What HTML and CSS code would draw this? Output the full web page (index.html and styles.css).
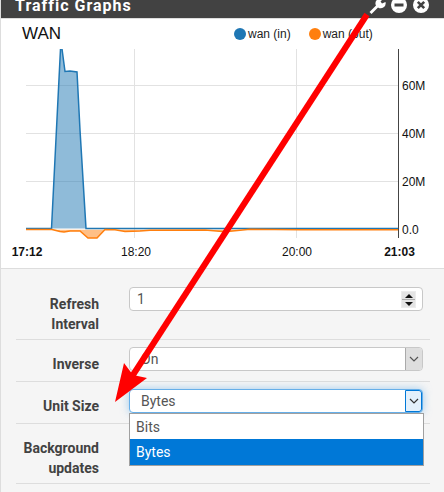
FILE: index.html
```html
<!DOCTYPE html>
<html lang="en">
<head>
    <meta charset="UTF-8">
    <meta name="viewport" content="width=device-width, initial-scale=1.0">
    <title>Traffic Graphs</title>
    <link rel="stylesheet" href="styles.css">
</head>
<body>
    <div class="panel">
        <header class="panel-heading">
            <h2>Traffic Graphs</h2>
            <div class="panel-icons">
                <svg width="18" height="18" viewBox="0 0 18 18">
                    <path d="M1.5 16 L8 9.5 A5 5 0 0 1 15 3 L12.5 5.5 L14 7.5 L17.5 6 A5 5 0 0 1 10 11.5 L3.5 18 Z" fill="#fff"/>
                </svg>
                <svg width="18" height="18" viewBox="0 0 18 18">
                    <circle cx="9" cy="9" r="8" fill="#fff"/>
                    <rect x="4.5" y="7.5" width="9" height="3" fill="#424242"/>
                </svg>
                <svg width="18" height="18" viewBox="0 0 18 18">
                    <circle cx="9" cy="9" r="8" fill="#fff"/>
                    <path d="M5.8 5.8 L12.2 12.2 M12.2 5.8 L5.8 12.2" stroke="#424242" stroke-width="2.6"/>
                </svg>
            </div>
        </header>

        <section class="chart-box">
            <div class="chart-title">
                <span class="wan">WAN</span>
                <div class="legend">
                    <span class="legend-item"><i class="dot dot-in"></i>wan (in)</span>
                    <span class="legend-item"><i class="dot dot-out"></i>wan (out)</span>
                </div>
            </div>
            <svg class="chart" width="443" height="219" viewBox="1 49 443 219">
                <path d="M26 85.5H398M26 133.5H398M26 181.5H398M134.5 49V238M296.5 49V238" stroke="#e2e2e2" stroke-width="1"/>
                <path d="M51.5 228.5 L60.5 49 L62 49 L65 71.5 L70 71 L77 72 L80 130 L86 228.5 L398 228.5 Z" fill="#1f77b4" fill-opacity="0.5"/>
                <path d="M26 228.5 H51.5 L60.5 49 M62 49 L65 71.5 L70 71 L77 72 L80 130 L86 228.5 H398" fill="none" stroke="#1f77b4" stroke-width="1.5"/>
                <path d="M26 229.5 H52 L60 231.5 L64 232 L70 231 L80 231 L88 238 L97 238 L105 229.5 L115 229.7 L125 231.5 L140 231 L150 230.2 L205 230 L225 231.7 L240 230.3 L250 229.3 L300 229.8 H398 Z" fill="#ff7f0e" fill-opacity="0.5"/>
                <path d="M26 229.5 H52 L60 231.5 L64 232 L70 231 L80 231 L88 238 L97 238 L105 229.5 L115 229.7 L125 231.5 L140 231 L150 230.2 L205 230 L225 231.7 L240 230.3 L250 229.3 L300 229.8 H398" fill="none" stroke="#ff7f0e" stroke-width="1.5"/>
                <path d="M398.5 49V238" stroke="#444" stroke-width="1"/>
                <g class="tick">
                    <text x="402" y="90">60M</text>
                    <text x="402" y="138">40M</text>
                    <text x="402" y="186">20M</text>
                    <text x="402" y="234">0.0</text>
                    <text x="136" y="255.5" text-anchor="middle">18:20</text>
                    <text x="297" y="255.5" text-anchor="middle">20:00</text>
                    <text class="tick-bold" x="27" y="255.5" text-anchor="middle">17:12</text>
                    <text class="tick-bold" x="399.5" y="255.5" text-anchor="middle">21:03</text>
                </g>
            </svg>
        </section>

        <form class="settings">
            <div class="row row-first">
                <label>Refresh<br>Interval</label>
                <div class="control number-box">
                    <span class="value">1</span>
                    <span class="spinner">
                        <b class="spin-up"></b>
                        <b class="spin-down"></b>
                    </span>
                </div>
            </div>
            <div class="row">
                <label>Inverse</label>
                <div class="control select-box">
                    <span class="value">On</span>
                    <span class="select-btn"><svg width="10" height="6" viewBox="0 0 10 6"><path d="M1 1 L5 5 L9 1" fill="none" stroke="#555" stroke-width="1.2"/></svg></span>
                </div>
            </div>
            <div class="row">
                <label>Unit Size</label>
                <div class="control select-box is-open">
                    <span class="value">Bytes</span>
                    <span class="select-btn"><svg width="10" height="6" viewBox="0 0 10 6"><path d="M1 1 L5 5 L9 1" fill="none" stroke="#333" stroke-width="1.2"/></svg></span>
                    <ul class="dropdown">
                        <li>Bits</li>
                        <li class="selected">Bytes</li>
                    </ul>
                </div>
            </div>
            <div class="row row-last">
                <label>Background<br>updates</label>
            </div>
        </form>

        <svg class="arrow" width="444" height="492" viewBox="0 0 444 492">
            <path d="M367 14.5 L131 378" stroke="#f00" stroke-width="6" fill="none"/>
            <path d="M115 402 L124 363 L133 375 L147 378 Z" fill="#f00"/>
        </svg>
    </div>
</body>
</html>
```
FILE: styles.css
```css
/* General Styling */
html, body {
    margin: 0;
    height: 100%;
    overflow: hidden;
}

body {
    font-family: 'Roboto', 'Liberation Sans', sans-serif;
    background: #ddd;
    color: #212121;
}

.panel {
    position: relative;
    margin-left: 1px;
    height: 492px;
    background: #f5f5f5;
}

/* Heading */
.panel-heading {
    height: 18px;
    background: #424242;
    border-bottom: 1px solid #ddd;
    display: flex;
    justify-content: space-between;
    padding: 0 14px;
    overflow: hidden;
}

.panel-heading h2 {
    margin: -3px 0 0;
    color: #fff;
    font-size: 16px;
    line-height: 18px;
    font-weight: 700;
    letter-spacing: 1px;
}

.panel-icons {
    display: flex;
    gap: 4px;
    height: 18px;
    margin-top: -4px;
}

/* Chart */
.chart-box {
    background: #fff;
    height: 250px;
    border-bottom: 1px solid #ddd;
    box-sizing: border-box;
}

.chart-title {
    height: 30px;
    display: flex;
    align-items: center;
    justify-content: space-between;
    padding-left: 21px;
}

.wan {
    font-family: 'Liberation Sans', sans-serif;
    font-size: 17px;
    color: #111;
}

.legend {
    display: flex;
    gap: 18px;
    font-family: 'Liberation Sans', sans-serif;
    font-size: 12px;
    color: #222;
    width: 210px;
}

.legend-item {
    display: flex;
    align-items: center;
    gap: 2px;
}

.dot {
    width: 12px;
    height: 12px;
    border-radius: 50%;
}

.dot-in {
    background: #1f77b4;
}

.dot-out {
    background: #ff7f0e;
}

.chart {
    display: block;
}

.tick {
    font-family: 'Liberation Sans', sans-serif;
    font-size: 12px;
    fill: #111;
}

.tick-bold {
    font-weight: 700;
}

/* Settings form */
.settings {
    padding: 0 14px 0 15px;
}

.row {
    display: flex;
    gap: 30px;
    height: 24px;
    padding: 7px 0 10px;
    border-bottom: 1px solid #ddd;
}

.row-first {
    height: 52px;
    padding: 18px 0 0;
}

.row-last {
    height: 52px;
    padding-bottom: 0;
}

.row label {
    width: 83px;
    height: 40px;
    text-align: right;
    font-size: 14px;
    line-height: 20px;
    font-weight: 700;
    color: #424242;
    padding-top: 7px;
}

.control {
    position: relative;
    width: 294px;
    height: 24px;
    box-sizing: border-box;
    background: #fff;
    border: 1px solid #c8c8c8;
    border-radius: 4px;
    display: flex;
    align-items: center;
    font-size: 14px;
    color: #555;
}

.value {
    flex: 1;
    padding-left: 7px;
}

.select-box .value {
    padding-left: 11px;
}

.spinner {
    display: flex;
    flex-direction: column;
    gap: 1px;
    width: 15px;
    height: 17px;
    box-sizing: border-box;
    background: #aaa;
    margin-right: 6px;
    border: 1px solid #ececec;
}

.spinner b {
    flex: 1;
    background: #e4e4e4;
    position: relative;
}

.spinner b::after {
    content: "";
    position: absolute;
    left: 3px;
    top: 2px;
    border-left: 4px solid transparent;
    border-right: 4px solid transparent;
}

.spin-up::after {
    border-bottom: 4px solid #111;
}

.spin-down::after {
    border-top: 4px solid #111;
}

.select-btn {
    width: 16px;
    height: 100%;
    background: #dedede;
    border-left: 1px solid #aaa;
    display: flex;
    align-items: center;
    justify-content: center;
    border-radius: 0 3px 3px 0;
}

.is-open {
    border-color: #66afe9;
    box-shadow: 0 0 8px rgba(102, 175, 233, 0.6);
}

.is-open .select-btn {
    box-sizing: border-box;
    width: 17px;
    background: #e3f0fb;
    border: 1px solid #0078d7;
}

/* Dropdown */
.dropdown {
    position: absolute;
    left: -1px;
    top: 23px;
    width: 295px;
    margin: 0;
    padding: 0;
    list-style: none;
    background: #fff;
    border: 1px solid #a0a0a0;
    box-sizing: border-box;
    z-index: 2;
}

.dropdown li {
    height: 25px;
    line-height: 27px;
    padding-left: 6px;
    font-size: 14px;
    color: #555;
}

.dropdown .selected {
    height: 26px;
    background: #0078d7;
    color: #fff;
}

/* Red arrow drawn over the screenshot */
.arrow {
    position: absolute;
    left: -1px;
    top: 0;
    z-index: 3;
}
```
